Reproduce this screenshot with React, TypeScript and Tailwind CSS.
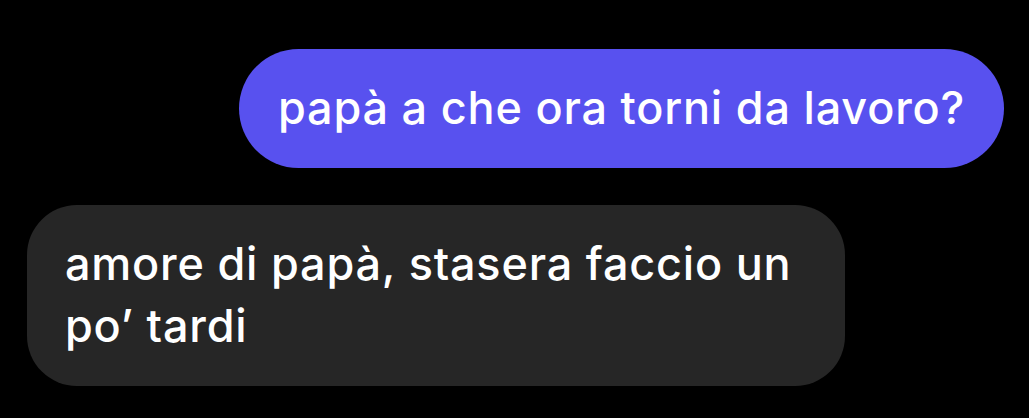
const Bubble = ({ text, mine }: { text: string; mine?: boolean }) => (
  <div
    className={
      mine
        ? "self-end rounded-[60px] bg-[#5851ef] px-[39px] pt-[28px] pb-[29px] text-white"
        : "self-start w-[818px] rounded-[50px] bg-[#262626] pl-[38px] pr-[40px] pt-[28px] pb-[29px] text-white"
    }
  >
    <p className="text-[45px] leading-[62px] font-medium tracking-[0.8px]">{text}</p>
  </div>
);

const App = () => {
  return (
    <div
      className="h-[418px] w-full bg-black pt-[49px] pl-[27px] pr-[25px] flex flex-col gap-[37px]"
      style={{ fontFamily: "Inter, 'Noto Sans', sans-serif" }}
    >
      <Bubble mine text="papà a che ora torni da lavoro?" />
      <Bubble text="amore di papà, stasera faccio un po’ tardi" />
    </div>
  );
};

export default App;
